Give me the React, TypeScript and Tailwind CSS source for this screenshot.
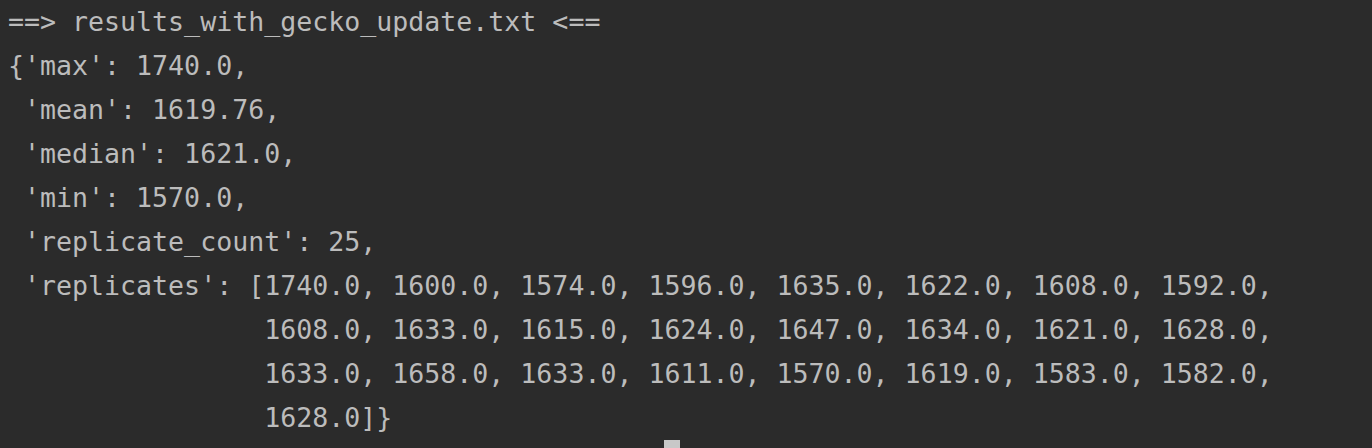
import React from 'react';

const lines = [
  "==> results_with_gecko_update.txt <==",
  "{'max': 1740.0,",
  " 'mean': 1619.76,",
  " 'median': 1621.0,",
  " 'min': 1570.0,",
  " 'replicate_count': 25,",
  " 'replicates': [1740.0, 1600.0, 1574.0, 1596.0, 1635.0, 1622.0, 1608.0, 1592.0,",
  "                1608.0, 1633.0, 1615.0, 1624.0, 1647.0, 1634.0, 1621.0, 1628.0,",
  "                1633.0, 1658.0, 1633.0, 1611.0, 1570.0, 1619.0, 1583.0, 1582.0,",
  "                1628.0]}",
];

const App: React.FC = () => {
  return (
    <div className="w-[1372px] h-[448px] overflow-hidden bg-[#2b2b2b] pl-2 text-[#bcbcbc] font-['DejaVu_Sans_Mono',monospace] text-[26.6px] leading-[44px]">
      {lines.map((line, i) => (
        <div key={i} className="whitespace-pre h-[44px]">
          {line}
        </div>
      ))}
      {/* caret */}
      <div className="h-[44px] pl-[656px]">
        <div className="w-4 h-[44px] bg-[#c8c8c8]"></div>
      </div>
    </div>
  );
};

export default App;
